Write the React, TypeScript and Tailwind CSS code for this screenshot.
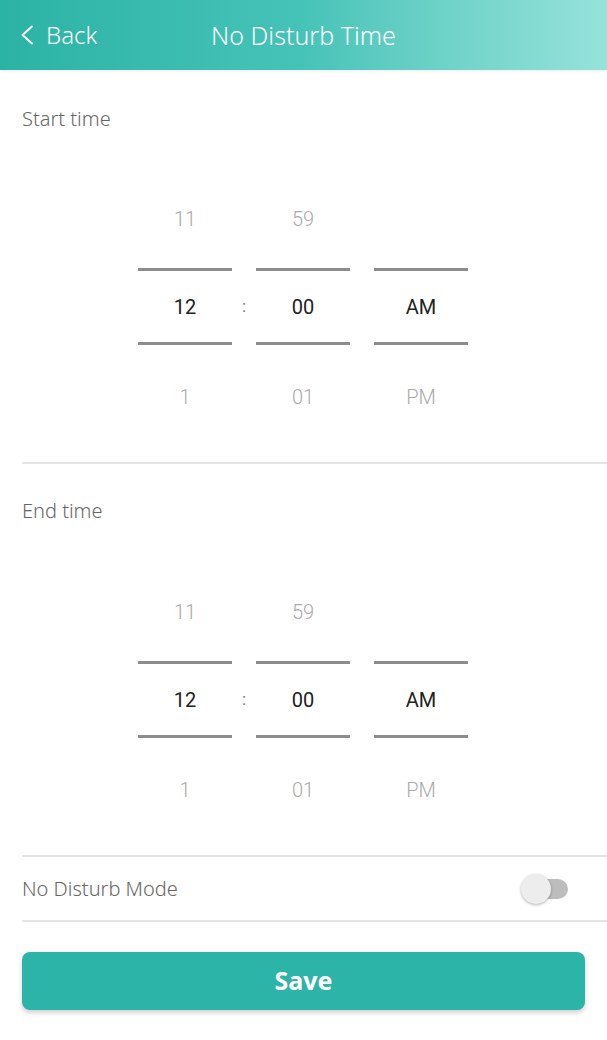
import React from "react";

function Picker() {
  const cols = [
    { a: "11", b: "12", c: "1" },
    { a: "59", b: "00", c: "01" },
    { a: "", b: "AM", c: "PM" },
  ];
  return (
    <div className="flex justify-center items-start pr-[1px]" style={{ fontFamily: "Roboto, 'Noto Sans', sans-serif" }}>
      {cols.map((c, i) => (
        <React.Fragment key={i}>
          {i > 0 && (
            <div className="w-[24px] flex flex-col items-center">
              <div className="h-[77px]" />
              <div className="h-[71px] flex items-center justify-center text-[17px] text-[#777]">
                {i === 1 ? ":" : ""}
              </div>
            </div>
          )}
          <div className="w-[94px] flex flex-col">
            <div className="h-[50px] flex items-center justify-center text-[20px] text-[#aaaaaa] font-light">{c.a}</div>
            <div className="h-[24px]" />
            <div className="h-[3px] bg-[#8c8c8c]" />
            <div className="h-[71px] flex items-center justify-center text-[20px] text-[#222]">{c.b}</div>
            <div className="h-[3px] bg-[#8c8c8c]" />
            <div className="h-[27px]" />
            <div className="h-[50px] flex items-center justify-center text-[20px] text-[#aaaaaa] font-light">{c.c}</div>
          </div>
        </React.Fragment>
      ))}
    </div>
  );
}

export default function App() {
  return (
    <div className="w-[607px] h-[1040px] bg-white overflow-hidden" style={{ fontFamily: "'Noto Sans', sans-serif" }}>
      <div className="h-[70px] grid grid-cols-[1fr_auto_1fr] items-center bg-gradient-to-r from-[#2bb3a6] via-[#46c3b8] via-50% to-[#95e3db] text-white shadow-[0_1px_3px_rgba(0,0,0,0.08)]">
        <div className="flex items-center pl-[20px]">
          <svg width="14" height="20" viewBox="0 0 14 20" fill="none">
            <polyline points="12,1.5 2.5,10 12,18.5" stroke="white" strokeWidth="2" strokeLinecap="round" strokeLinejoin="round" />
          </svg>
          <span className="ml-[12px] text-[24px] leading-none font-light">Back</span>
        </div>
        <div className="text-[25px] leading-none font-light">No Disturb Time</div>
        <div />
      </div>

      <div className="pl-[22px] pt-[35px] text-[20px] leading-[28px] text-[#666] font-light">Start time</div>
      <div className="mt-[61px]">
        <Picker />
      </div>
      <div className="ml-[22px] mt-[40px] h-[2px] bg-[#e4e4e4]" />

      <div className="pl-[22px] pt-[33px] text-[20px] leading-[28px] text-[#666] font-light">End time</div>
      <div className="mt-[62px]">
        <Picker />
      </div>
      <div className="ml-[22px] mt-[40px] h-[2px] bg-[#e4e4e4]" />

      <div className="h-[63px] flex items-center justify-between pl-[22px] pr-[39px]">
        <span className="text-[20px] text-[#666] font-light">No Disturb Mode</span>
        <div className="relative w-[47px] h-[30px]">
          <div className="absolute right-0 top-[5px] w-[36px] h-[20px] rounded-full bg-[#bdbdbd]" />
          <div className="absolute left-0 top-0 w-[30px] h-[30px] rounded-full bg-[#ededed] shadow-[0_1px_3px_rgba(0,0,0,0.3)]" />
        </div>
      </div>
      <div className="ml-[22px] h-[2px] bg-[#e4e4e4]" />

      <div className="mx-[22px] mt-[30px] h-[58px] rounded-[8px] bg-[#2bb4a7] flex items-center justify-center text-white text-[25px] font-bold shadow-[0_3px_5px_rgba(0,0,0,0.18)]">
        Save
      </div>
    </div>
  );
}
